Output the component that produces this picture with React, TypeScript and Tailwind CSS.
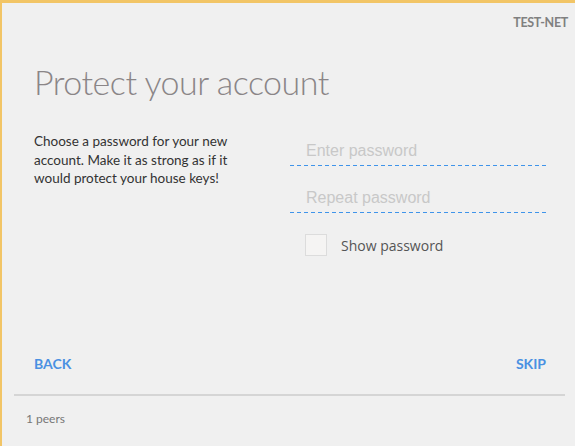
import { useState } from 'react';

const App = () => {
  const [mostrar, setMostrar] = useState(false);

  const lineaPunteada =
    "h-px bg-[linear-gradient(to_right,#3f94ea_4px,transparent_4px)] bg-[length:7px_1px] bg-repeat-x";

  return (
    <div className="w-[575px] h-[446px] bg-[#f0f0f0] border-t-[3px] border-l-2 border-[#f2c566] flex flex-col font-['Lato','Noto_Sans',sans-serif] overflow-hidden">
      <div className="flex justify-end pr-[7px] pt-[12px] h-[36px]">
        <span className="text-[12.5px] leading-[16px] font-bold text-[#808080] tracking-tight">TEST-NET</span>
      </div>

      <h1 className="pl-[32px] mt-[26px] text-[34px] font-light text-[#8a8587] leading-none tracking-[-0.5px]">
        Protect your account
      </h1>

      <div className="flex pl-[32px] pr-[29px] mt-[33px]">
        <p className="w-[228px] text-[13.5px] leading-[18.5px] text-[#333]">
          Choose a password for your new account. Make it as strong as if it would protect your house keys!
        </p>
        <div className="flex-1 ml-[28px] flex flex-col">
          <input
            type={mostrar ? 'text' : 'password'}
            placeholder="Enter password"
            className="h-[29px] mt-[4px] pl-[16px] bg-transparent outline-none text-[16px] font-['Liberation_Sans',sans-serif] placeholder:text-[#c8c8c8]"
          />
          <div className={lineaPunteada}></div>
          <input
            type={mostrar ? 'text' : 'password'}
            placeholder="Repeat password"
            className="h-[29px] mt-[17px] pl-[16px] bg-transparent outline-none text-[16px] font-['Liberation_Sans',sans-serif] placeholder:text-[#c8c8c8]"
          />
          <div className={lineaPunteada}></div>
          <label className="flex items-center mt-[21px] ml-[15px] cursor-pointer">
            <input type="checkbox" checked={mostrar} onChange={() => setMostrar(!mostrar)} className="hidden" />
            <span className="w-[22px] h-[22px] border border-[#dcdcdc] bg-[#f5f4f3]"></span>
            <span className="ml-[14px] text-[14px] text-[#555] font-['Open_Sans',sans-serif]">Show password</span>
          </label>
        </div>
      </div>

      <div className="flex-1"></div>

      <div className="flex justify-between pl-[32px] pr-[29px] pb-[20px]">
        <button className="text-[14px] leading-[20px] font-bold text-[#4a90e2]">BACK</button>
        <button className="text-[14px] leading-[20px] font-bold text-[#4a90e2]">SKIP</button>
      </div>

      <div className="ml-[12px] mr-[10px] h-[2px] bg-[#d5d5d5]"></div>

      <div className="h-[50px] pl-[24px] pt-[15px]">
        <span className="text-[12px] leading-[16px] text-[#777] block">1 peers</span>
      </div>
    </div>
  );
};

export default App;
